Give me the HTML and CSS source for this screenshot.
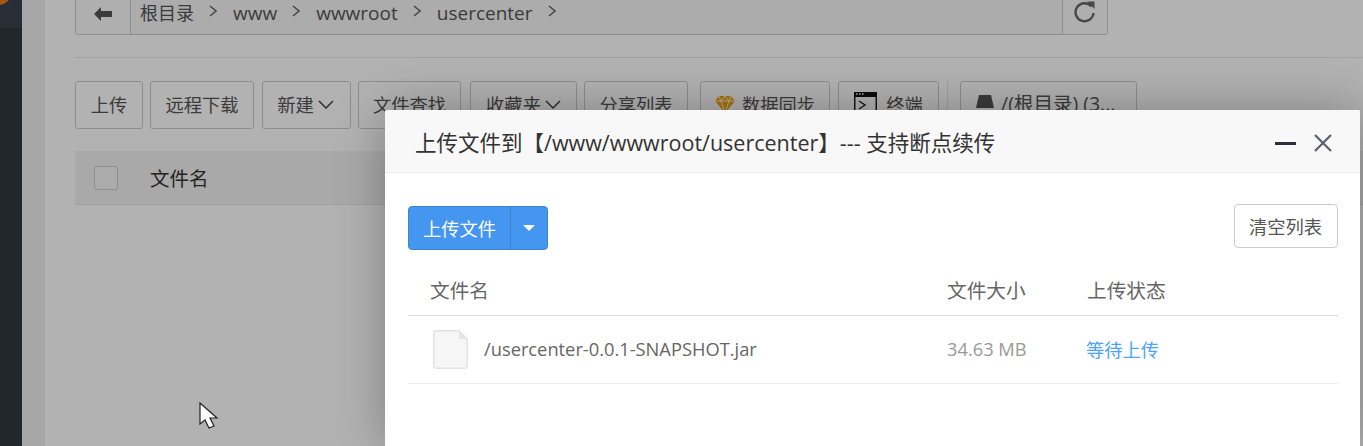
FILE: index.html
```html
<!DOCTYPE html>
<html lang="en">
<head>
    <meta charset="UTF-8">
    <meta name="viewport" content="width=device-width, initial-scale=1.0">
    <title>文件上传</title>
    <link rel="stylesheet" href="styles.css">
</head>
<body>
    <div class="sidebar">
        <div class="sidebar-top"><span class="logo-dot"></span></div>
    </div>
    <div class="page">
        <div class="panel">
            <div class="path-bar">
                <div class="path-back">
                    <svg width="18" height="14" viewBox="0 0 18 14"><path d="M0 7 7 0v4h11v6H7v4z" fill="#555"/></svg>
                </div>
                <div class="path-crumbs">
                    <span class="crumb crumb-root">根目录</span>
                    <svg class="chevron" width="8" height="12" viewBox="0 0 8 12"><path d="M1 1l6 5-6 5" fill="none" stroke="#666" stroke-width="1.5"/></svg>
                    <span class="crumb">www</span>
                    <svg class="chevron" width="8" height="12" viewBox="0 0 8 12"><path d="M1 1l6 5-6 5" fill="none" stroke="#666" stroke-width="1.5"/></svg>
                    <span class="crumb">wwwroot</span>
                    <svg class="chevron" width="8" height="12" viewBox="0 0 8 12"><path d="M1 1l6 5-6 5" fill="none" stroke="#666" stroke-width="1.5"/></svg>
                    <span class="crumb">usercenter</span>
                    <svg class="chevron" width="8" height="12" viewBox="0 0 8 12"><path d="M1 1l6 5-6 5" fill="none" stroke="#666" stroke-width="1.5"/></svg>
                </div>
                <div class="path-refresh">
                    <svg width="24" height="22" viewBox="0 0 24 22"><path d="M18.5 5.5A9 9 0 1 0 20.5 12" fill="none" stroke="#666" stroke-width="2.4"/><path d="M14 0.5h7.5V8z" fill="#666"/></svg>
                </div>
            </div>
            <div class="divider"></div>
            <div class="toolbar">
                <button class="btn btn-upload">上传</button>
                <button class="btn btn-remote">远程下载</button>
                <button class="btn btn-new">新建<svg class="caret" width="16" height="9" viewBox="0 0 16 9"><path d="M1 1l7 7 7-7" fill="none" stroke="#444" stroke-width="1.5"/></svg></button>
                <button class="btn btn-find">文件查找</button>
                <button class="btn btn-fav">收藏夹<svg class="caret" width="16" height="9" viewBox="0 0 16 9"><path d="M1 1l7 7 7-7" fill="none" stroke="#444" stroke-width="1.5"/></svg></button>
                <button class="btn btn-share">分享列表</button>
                <button class="btn btn-sync">
                    <svg class="btn-icon" width="20" height="17" viewBox="0 0 20 17"><path d="M4 0h12l4 5-10 12L0 5z" fill="#f5a30c"/><path d="M0 5h20M6 5l4 12 4-12M4 0l2 5 4-5 4 5 2-5" fill="none" stroke="#fff" stroke-width=".9"/></svg>数据同步</button>
                <button class="btn btn-term">
                    <svg class="btn-icon" width="23" height="24" viewBox="0 0 23 24"><rect x=".75" y=".75" width="21.5" height="22.5" fill="#fff" stroke="#222" stroke-width="1.5"/><rect width="23" height="5" fill="#111"/><path d="M2 2h1.500M5 2h1.500M8 2h1.500" stroke="#fff" stroke-width="1.400"/><path d="M5 9l6 4-6 4" fill="none" stroke="#222" stroke-width="1.500"/><path d="M11 19h6" stroke="#222" stroke-width="2"/></svg>终端</button>
                <span class="toolbar-sep"></span>
                <button class="btn btn-disk">
                    <svg class="btn-icon" width="18" height="22" viewBox="0 0 18 22"><path d="M3 0h12l3 13H0z" fill="#555"/><rect y="15" width="18" height="7" fill="#555"/></svg>/(根目录) (3...</button>
            </div>
            <div class="file-head">
                <span class="checkbox"></span>
                <span class="file-head-name">文件名</span>
            </div>
        </div>
    </div>

    <div class="overlay"></div>

    <div class="modal">
        <div class="modal-header">
            <span class="modal-title">上传文件到【/www/wwwroot/usercenter】--- 支持断点续传</span>
            <span class="modal-min"></span>
            <svg class="modal-close" width="18" height="18" viewBox="0 0 18 18"><path d="M1 1l16 16M17 1 1 17" stroke="#5a5f6e" stroke-width="2.200"/></svg>
        </div>
        <div class="modal-body">
            <div class="upload-actions">
                <div class="split-btn">
                    <span class="split-main">上传文件</span>
                    <span class="split-arrow"><i class="arrow-down"></i></span>
                </div>
                <button class="btn-clear">清空列表</button>
            </div>
            <div class="upload-row upload-row-head">
                <span class="col-name col-head">文件名</span>
                <span class="col-size">文件大小</span>
                <span class="col-status">上传状态</span>
            </div>
            <div class="upload-row upload-row-file">
                <div class="col-name">
                    <svg class="file-icon" width="35" height="39" viewBox="0 0 35 39"><path d="M3 .75h23L34.250 9v27a2.500 2.500 0 0 1-2.500 2.250H3A2.500 2.500 0 0 1 .75 36V3A2.500 2.500 0 0 1 3 .75z" fill="#f6f6f6" stroke="#e2e2e2" stroke-width="1.500"/><path d="M26 1v8h8z" fill="#e6e6e6"/></svg>
                    <span class="file-path">/usercenter-0.0.1-SNAPSHOT.jar</span>
                </div>
                <span class="col-size file-size">34.63 MB</span>
                <span class="col-status file-status">等待上传</span>
            </div>
        </div>
    </div>

    <svg class="cursor" width="20" height="28" viewBox="0 0 20 28"><path d="M1 1v21l5-4 4 8 5-2-4-8h7z" fill="#fff" stroke="#222" stroke-width="1.200"/></svg>
</body>
</html>
```

FILE: styles.css
```css
* {
    box-sizing: border-box;
}

html,
body {
    height: 100%;
}

body {
    display: flex;
    margin: 0;
    overflow: hidden;
    position: relative;
    font-family: "Open Sans", "Noto Sans CJK SC", sans-serif;
    font-size: 18.3px;
    color: #555;
    background-color: #f0f0f0;
}

.sidebar {
    flex: 0 0 22px;
    background-color: #313943;
}

.sidebar-top {
    height: 28px;
    background-color: #3a424d;
    overflow: hidden;
}

.logo-dot {
    display: block;
    width: 24px;
    height: 24px;
    margin: -19px 0 0 -13px;
    border-radius: 50%;
    background-color: #ef7a1e;
}

.page {
    flex: 1;
    padding-left: 23px;
}

.panel {
    height: 100%;
    padding-left: 30px;
    background-color: #fff;
}

/* path bar */
.path-bar {
    display: flex;
    width: 1033px;
    height: 35px;
    border: 1px solid #ccc;
    border-top: none;
    border-radius: 0 0 3px 3px;
    background-color: #f6f6f6;
}

.path-back {
    display: flex;
    justify-content: center;
    align-items: center;
    width: 55px;
    padding-bottom: 7px;
    border-right: 1px solid #ccc;
    background-color: #fbfbfb;
}

.path-crumbs {
    flex: 1;
    display: flex;
    align-items: center;
    padding: 0 0 8px 9px;
    font-size: 19px;
    color: #555;
}

.crumb {
    line-height: 24px;
}

.crumb-root {
    font-size: 18px;
}

.chevron {
    margin: 0 16px 5px 15px;
}

.path-refresh {
    display: flex;
    justify-content: center;
    align-items: flex-start;
    width: 45px;
    padding-top: 1px;
    border-left: 1px solid #ccc;
    background-color: #fbfbfb;
}

.divider {
    width: 100%;
    height: 1px;
    margin-top: 22px;
    background-color: #e6e6e6;
}

/* toolbar */
.toolbar {
    display: flex;
    align-items: stretch;
    height: 48px;
    margin-top: 23px;
}

.btn {
    display: flex;
    justify-content: center;
    align-items: center;
    height: 48px;
    padding: 0 0 2px;
    font-family: inherit;
    font-size: 18.3px;
    color: #555;
    background-color: #fff;
    border: 1px solid #ccc;
    border-radius: 3px;
}

.btn-upload { width: 68px; margin-right: 7px; }
.btn-remote { width: 104px; margin-right: 8px; }
.btn-new { width: 89px; margin-right: 7px; padding-right: 2px; }
.btn-find { width: 103px; margin-right: 9px; }
.btn-fav { width: 107px; margin-right: 7px; }
.btn-share { width: 104px; margin-right: 12px; }
.btn-sync { width: 130px; margin-right: 8px; }
.btn-term { width: 101px; }

.btn-disk {
    justify-content: flex-start;
    width: 177px;
    padding: 0 0 6px 15px;
    font-size: 19.5px;
    white-space: nowrap;
}

.caret {
    margin-left: 4px;
}

.btn-icon {
    margin-right: 7px;
}

.btn-term .btn-icon {
    margin-right: 9px;
}

.btn-disk .btn-icon {
    margin-top: 8px;
}

.toolbar-sep {
    width: 1px;
    height: 40px;
    margin: 0 12px 0 8px;
    background-color: #e6e6e6;
}

/* file table head */
.file-head {
    display: flex;
    align-items: center;
    height: 54px;
    margin-top: 22px;
    padding-left: 19px;
    color: #333;
    background-color: #f2f2f2;
    border-bottom: 1px solid #e4e4e4;
}

.checkbox {
    width: 24px;
    height: 24px;
    margin-right: 32px;
    background-color: #f6f6f6;
    border: 1px solid #ccc;
    border-radius: 3px;
}

.file-head-name {
    font-size: 19.5px;
}

.overlay {
    position: absolute;
    top: 0;
    right: 0;
    bottom: 0;
    left: 0;
    background-color: rgba(0, 0, 0, 0.3);
}

/* upload dialog */
.modal {
    position: absolute;
    top: 110px;
    left: 385px;
    width: 975px;
    height: 336px;
    background-color: #fff;
    border-radius: 2px 2px 0 0;
    box-shadow: 1px 1px 50px rgba(0, 0, 0, 0.3);
}

.modal-header {
    display: flex;
    align-items: center;
    height: 63px;
    padding: 0 28px 0 30px;
    background-color: #f8f8f8;
    border-bottom: 1px solid #eee;
    border-radius: 2px 2px 0 0;
}

.modal-title {
    flex: 1;
    font-size: 21.5px;
    color: #333;
    white-space: nowrap;
}

.modal-min {
    width: 21px;
    height: 3px;
    margin: 4px 18px 0 0;
    background-color: #2d2d3f;
}

.modal-close {
    margin-top: 4px;
}

.modal-body {
    padding: 31px 22px 0 23px;
}

.upload-actions {
    display: flex;
    justify-content: space-between;
    align-items: flex-start;
    height: 44px;
}

.split-btn {
    display: flex;
    height: 44px;
    margin-top: 2px;
    color: #fff;
    background-color: #4596f0;
    border: 1px solid #3b85cf;
    border-radius: 4px;
}

.split-main {
    display: flex;
    align-items: center;
    width: 102px;
    padding-left: 14px;
    border-right: 1px solid #3b85cf;
}

.split-arrow {
    display: flex;
    justify-content: center;
    align-items: center;
    width: 36px;
}

.arrow-down {
    width: 0;
    height: 0;
    border-top: 6px solid #fff;
    border-left: 6px solid transparent;
    border-right: 6px solid transparent;
}

.btn-clear {
    width: 104px;
    height: 44px;
    padding: 0 1px 0 0;
    font-family: inherit;
    font-size: 18.3px;
    color: #555;
    background-color: #fff;
    border: 1px solid #ccc;
    border-radius: 4px;
}

.upload-row {
    display: flex;
    align-items: center;
    height: 68px;
    border-bottom: 1px solid #eee;
}

.upload-row-head {
    padding-top: 15px;
    font-size: 19.7px;
    border-bottom-color: #ddd;
    color: #666;
}

.upload-row-file {
    padding-bottom: 2px;
}

.col-name {
    display: flex;
    align-items: center;
    width: 539px;
    padding-left: 25px;
}

.col-head {
    padding-left: 22px;
}

.col-size {
    width: 140px;
}

.file-icon {
    margin: 2px 16px 0 0;
}

.file-path {
    color: #666;
}

.file-size {
    color: #999;
}

.file-status {
    margin-left: -1px;
    color: #4aa3ff;
}

.cursor {
    position: absolute;
    top: 402px;
    left: 199px;
}
```
